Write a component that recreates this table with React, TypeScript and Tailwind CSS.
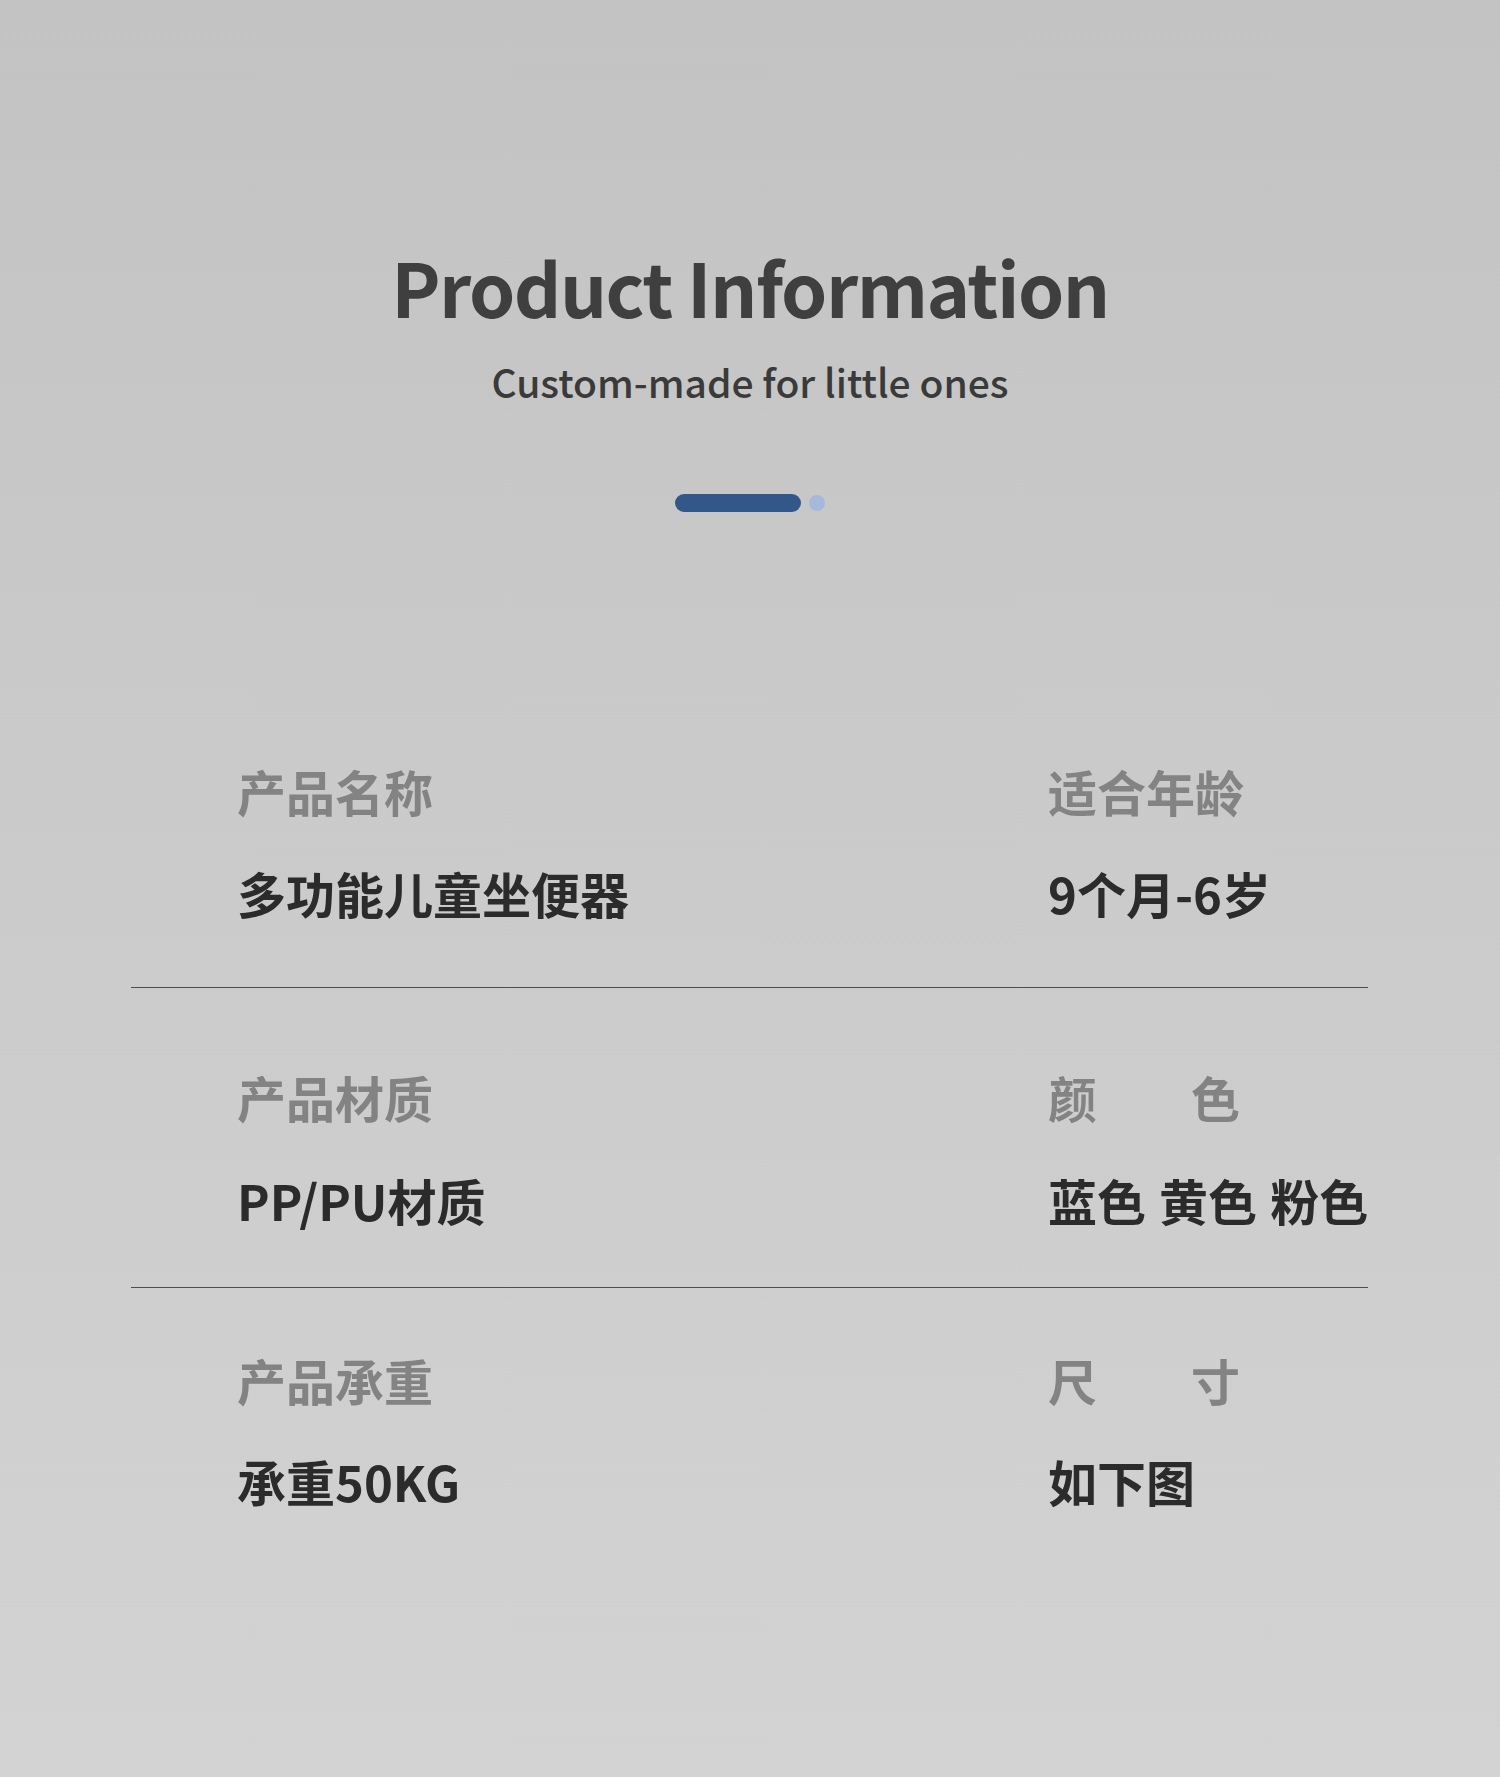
import React from 'react';

const cjk = "font-['Noto_Sans_CJK_SC',sans-serif]";

type Cell = { label: string[]; value: string };

const rows: { left: Cell; right: Cell; pt: string; gap: string; pb: string; line: boolean }[] = [
  {
    left: { label: ['产品名称'], value: '多功能儿童坐便器' },
    right: { label: ['适合年龄'], value: '9个月-6岁' },
    pt: 'pt-0',
    gap: 'mt-[53px]',
    pb: 'pb-[70px]',
    line: true,
  },
  {
    left: { label: ['产品材质'], value: 'PP/PU材质' },
    right: { label: ['颜', '色'], value: '蓝色 黄色 粉色' },
    pt: 'pt-[84px]',
    gap: 'mt-[54px]',
    pb: 'pb-[63px]',
    line: true,
  },
  {
    left: { label: ['产品承重'], value: '承重50KG' },
    right: { label: ['尺', '寸'], value: '如下图' },
    pt: 'pt-[67px]',
    gap: 'mt-[52px]',
    pb: 'pb-0',
    line: false,
  },
];

function InfoCell({ cell, gap }: { cell: Cell; gap: string }) {
  return (
    <div>
      {cell.label.length > 1 ? (
        <div className="flex w-[192px] justify-between text-[49px] leading-none font-bold text-[#838383]">
          {cell.label.map((c) => (
            <span key={c}>{c}</span>
          ))}
        </div>
      ) : (
        <div className="text-[49px] leading-none font-bold text-[#838383]">{cell.label[0]}</div>
      )}
      <div className={`${gap} text-[49px] leading-none font-bold whitespace-nowrap text-[#2b2b2b] [word-spacing:2px]`}>
        {cell.value}
      </div>
    </div>
  );
}

export default function App() {
  return (
    <div className={`${cjk} h-[1777px] w-full bg-gradient-to-b from-[#c3c3c3] to-[#d3d3d3]`}>
      {/* Header */}
      <div className="flex flex-col items-center pt-[249px]">
        <h1 className="text-[74px] leading-none font-bold tracking-[-1.5px] text-[#3f3f3f]">Product Information</h1>
        <p className="mt-[39px] text-[39px] leading-none font-medium text-[#3a3a3a]">Custom-made for little ones</p>
        <div className="mt-[93px] flex items-center gap-2">
          <span className="h-[18px] w-[126px] rounded-full bg-[#34578a]" />
          <span className="h-4 w-4 rounded-full bg-[#a4b9dc]" />
        </div>
      </div>

      {/* Info table */}
      <div className="mt-[254px] ml-[131px] w-[1237px]">
        {rows.map((r, i) => (
          <div
            key={i}
            className={`grid grid-cols-[917px_1fr] ${r.pt} ${r.pb} ${r.line ? 'border-b border-[#4d4d4d]' : ''}`}
          >
            <div className="pl-[106px]">
              <InfoCell cell={r.left} gap={r.gap} />
            </div>
            <InfoCell cell={r.right} gap={r.gap} />
          </div>
        ))}
      </div>
    </div>
  );
}
